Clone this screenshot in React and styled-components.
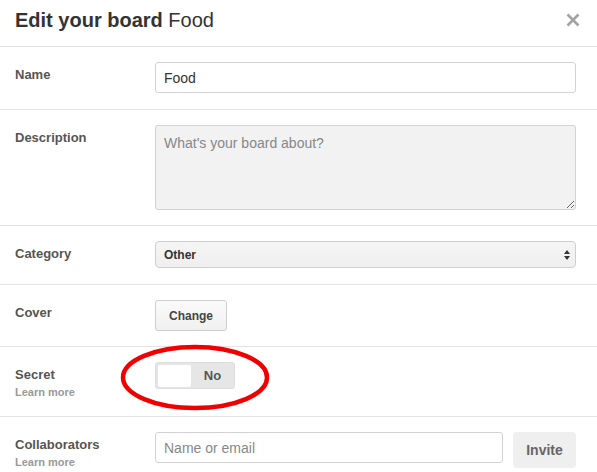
import React from "react";
import styled, { createGlobalStyle } from "styled-components";

const Global = createGlobalStyle`
  html, body { margin: 0; padding: 0; background: #fff; }
  body { font-family: "Liberation Sans", Arial, sans-serif; color: #333; }
  * { box-sizing: border-box; }
`;

const Modal = styled.div`
  width: 597px;
  background: #fff;
`;

const Header = styled.div`
  height: 47px;
  display: flex;
  align-items: center;
  justify-content: space-between;
  padding: 0 17px 6px 15px;
  border-bottom: 1px solid #e3e3e3;
`;

const Title = styled.h1`
  margin: 0;
  font-size: 20px;
  font-weight: 700;
  color: #333;
  span { font-weight: 400; }
`;

const Close = styled.button`
  border: 0;
  background: none;
  padding: 0;
  width: 14px;
  height: 14px;
  display: flex;
  cursor: pointer;
`;

const Row = styled.div`
  position: relative;
  display: grid;
  grid-template-columns: 140px 1fr;
  padding: 15px 21px ${(p) => p.$pb || 15}px 15px;
  border-bottom: ${(p) => (p.$last ? "0" : "1px solid #e3e3e3")};
`;

const LabelCol = styled.div`
  padding-top: 5px;
  display: flex;
  flex-direction: column;
`;

const Label = styled.label`
  font-size: 13px;
  line-height: 16px;
  font-weight: 700;
  color: #555;
`;

const Sub = styled.a`
  margin-top: 2px;
  font-size: 11px;
  line-height: 14px;
  font-weight: 700;
  color: #999;
  text-decoration: none;
`;

const TextInput = styled.input`
  width: 100%;
  height: 31px;
  border: 1px solid #d2d2d2;
  border-radius: 3px;
  padding: 0 8px;
  font-family: inherit;
  font-size: 14px;
  color: #333;
  background: #fff;
  outline: none;
  &::placeholder { color: #888; }
`;

const TextArea = styled.textarea`
  width: 100%;
  height: 85px;
  border: 1px solid #d2d2d2;
  border-radius: 3px;
  padding: 9px 8px;
  font-family: inherit;
  font-size: 14px;
  background: #f2f2f2;
  color: #333;
  resize: vertical;
  display: block;
  outline: none;
  &::placeholder { color: #888; }
`;

const SelectBox = styled.div`
  height: 27px;
  border: 1px solid #cfcfcf;
  border-radius: 4px;
  background: linear-gradient(#f5f5f5, #efefef);
  display: flex;
  align-items: center;
  justify-content: space-between;
  padding: 0 4px 0 8px;
  font-size: 12px;
  font-weight: 700;
  color: #333;
`;

const Button = styled.button`
  height: 31px;
  padding: 0 13px;
  border: 1px solid #cfcfcf;
  border-radius: 3px;
  background: linear-gradient(#fafafa, #f0f0f0);
  font-family: inherit;
  font-size: 12px;
  font-weight: 700;
  color: #444;
  cursor: pointer;
`;

const Toggle = styled.div`
  width: 80px;
  height: 27px;
  border-radius: 3px;
  background: #e6e6e6;
  border: 1px solid #ddd;
  display: flex;
  align-items: center;
  padding: 2px;
`;

const Knob = styled.div`
  width: 33px;
  height: 22px;
  border-radius: 2px;
  background: #fff;
`;

const ToggleText = styled.span`
  flex: 1;
  text-align: center;
  font-size: 13px;
  font-weight: 700;
  color: #555;
  padding-left: 2px;
`;

const Content = styled.div`
  display: flex;
  align-items: flex-start;
  gap: 10px;
`;

const InviteButton = styled.button`
  width: 63px;
  height: 36px;
  border: 0;
  border-radius: 4px;
  background: #efefef;
  font-family: inherit;
  font-size: 14px;
  font-weight: 700;
  color: #666;
  flex-shrink: 0;
`;

const Annotation = styled.svg`
  position: absolute;
  left: 118px;
  top: -5px;
  pointer-events: none;
`;

export default function App() {
  return (
    <>
      <Global />
      <Modal>
        <Header>
          <Title>
            Edit your board <span>Food</span>
          </Title>
          <Close aria-label="Close">
            <svg width="14" height="14" viewBox="0 0 14 14">
              <path d="M1.5 1.5 L12.5 12.5 M12.5 1.5 L1.5 12.5" stroke="#a3a3a3" strokeWidth="2.6" strokeLinecap="butt" />
            </svg>
          </Close>
        </Header>

        <Row $pb={16}>
          <LabelCol><Label>Name</Label></LabelCol>
          <TextInput defaultValue="Food" />
        </Row>

        <Row>
          <LabelCol><Label>Description</Label></LabelCol>
          <TextArea placeholder="What's your board about?" />
        </Row>

        <Row $pb={16}>
          <LabelCol><Label>Category</Label></LabelCol>
          <SelectBox>
            Other
            <svg width="8" height="12" viewBox="0 0 8 12">
              <path d="M4 1 L7 5 L1 5 Z M4 11 L7 7 L1 7 Z" fill="#333" />
            </svg>
          </SelectBox>
        </Row>

        <Row>
          <LabelCol><Label>Cover</Label></LabelCol>
          <div><Button>Change</Button></div>
        </Row>

        <Row $pb={17}>
          <LabelCol>
            <Label>Secret</Label>
            <Sub href="#">Learn more</Sub>
          </LabelCol>
          <div>
            <Toggle>
              <Knob />
              <ToggleText>No</ToggleText>
            </Toggle>
          </div>
          <Annotation width="154" height="70" viewBox="0 0 154 70">
            <ellipse cx="77" cy="35.5" rx="72" ry="30.5" fill="none" stroke="#f00000" strokeWidth="4.5" />
          </Annotation>
        </Row>

        <Row $last>
          <LabelCol>
            <Label>Collaborators</Label>
            <Sub href="#">Learn more</Sub>
          </LabelCol>
          <Content>
            <TextInput placeholder="Name or email" />
            <InviteButton>Invite</InviteButton>
          </Content>
        </Row>
      </Modal>
    </>
  );
}
